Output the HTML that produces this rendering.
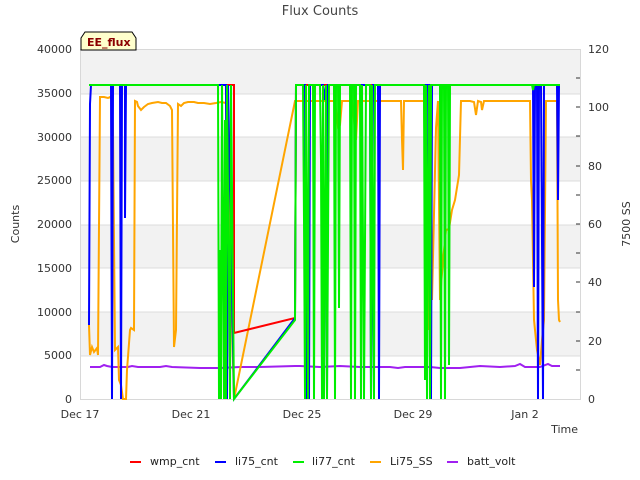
<!DOCTYPE html>
<html><head><meta charset="utf-8"><style>
body{margin:0;background:#fff;}
svg{display:block;font-family:"DejaVu Sans","Liberation Sans",sans-serif;}
</style></head><body>
<svg width="640" height="480" viewBox="0 0 640 480">
<rect width="640" height="480" fill="#fff"/>
<text x="320" y="15" font-size="13" fill="#444" text-anchor="middle">Flux Counts</text>
<!-- bands -->
<rect x="80" y="49" width="500" height="45" fill="#f2f2f2"/>
<rect x="80" y="137" width="500" height="44" fill="#f2f2f2"/>
<rect x="80" y="225" width="500" height="43" fill="#f2f2f2"/>
<rect x="80" y="312" width="500" height="44" fill="#f2f2f2"/>
<g stroke="#dcdcdc" stroke-width="1">
<line x1="80" y1="94" x2="580" y2="94"/><line x1="80" y1="137" x2="580" y2="137"/>
<line x1="80" y1="181" x2="580" y2="181"/><line x1="80" y1="225" x2="580" y2="225"/>
<line x1="80" y1="268" x2="580" y2="268"/><line x1="80" y1="312" x2="580" y2="312"/>
<line x1="80" y1="356" x2="580" y2="356"/>
</g>
<rect x="80.5" y="49.5" width="500" height="350" fill="none" stroke="#d8d8d8"/>
<!-- left labels -->
<g font-size="11" fill="#333" text-anchor="end">
<text x="72" y="53">40000</text><text x="72" y="97">35000</text><text x="72" y="141">30000</text>
<text x="72" y="184">25000</text><text x="72" y="228">20000</text><text x="72" y="272">15000</text>
<text x="72" y="316">10000</text><text x="72" y="359">5000</text><text x="72" y="403">0</text>
</g>
<g font-size="11" fill="#333">
<text x="588" y="53">120</text><text x="588" y="111">100</text><text x="588" y="170">80</text>
<text x="588" y="228">60</text><text x="588" y="286">40</text><text x="588" y="345">20</text><text x="588" y="403">0</text>
</g>
<g stroke="#333" stroke-width="1">
<line x1="576" y1="78" x2="580" y2="78"/><line x1="576" y1="107" x2="580" y2="107"/>
<line x1="576" y1="136" x2="580" y2="136"/><line x1="576" y1="166" x2="580" y2="166"/>
<line x1="576" y1="195" x2="580" y2="195"/><line x1="576" y1="224" x2="580" y2="224"/>
<line x1="576" y1="253" x2="580" y2="253"/><line x1="576" y1="282" x2="580" y2="282"/>
<line x1="576" y1="312" x2="580" y2="312"/><line x1="576" y1="341" x2="580" y2="341"/>
<line x1="576" y1="370" x2="580" y2="370"/>
</g>
<text x="19" y="224" font-size="11" fill="#333" transform="rotate(-90 19 224)" text-anchor="middle">Counts</text>
<text x="630" y="224" font-size="11" fill="#333" transform="rotate(-90 630 224)" text-anchor="middle">7500 SS</text>
<g font-size="11" fill="#333" text-anchor="middle">
<text x="80" y="418">Dec 17</text><text x="191" y="418">Dec 21</text><text x="302" y="418">Dec 25</text>
<text x="413" y="418">Dec 29</text><text x="525" y="418">Jan 2</text>
</g>
<text x="578" y="433" font-size="11" fill="#333" text-anchor="end">Time</text>
<!-- purple -->
<polyline fill="none" stroke="#a020f0" stroke-width="2" points="90,367 100,367 104,365 107,366 112,367 128,367 132,366 138,367 150,367 160,367 166,366 172,367 200,368 220,368 240,367 260,367 295,366 300,366 320,367 340,366 360,367 380,367 390,367 398,368 405,367 412,367 420,367 430,367 440,368 460,368 470,367 480,366 500,367 515,366 520,364 525,367 540,367 548,364 552,366 560,366"/>
<!-- orange -->
<polyline fill="none" stroke="#ffa500" stroke-width="2" points="89,325 90,355 92,347 94,352 97,348 98,355 100,97 104,97 108,98 110,97 112,100 113,130 115,350 118,347 119,380 121,385 123,399 126,399 127,370 130,330 131,328 134,330 135,101 137,102 138,106 141,110 144,107 148,104 152,103 158,102 162,103 166,103 170,106 172,110 174,347 176,330 178,104 181,106 184,103 188,102 194,102 198,103 204,103 210,104 216,103 221,102 226,103 234,399 295,101 300,101 306,101 312,101 320,101 325,101 330,101 335,101 338,127 340,125 342,101 345,101 348,101 352,101 356,140 358,101 362,101 366,101 370,101 380,101 390,101 398,101 401,101 402,140 403,170 404,101 408,101 415,101 420,101 424,101 428,330 430,250 432,300 436,128 438,101 440,300 443,260 446,230 449,229 452,210 455,200 459,175 461,101 464,101 470,101 474,102 476,115 478,101 481,102 482,110 484,101 490,101 500,101 515,101 525,101 530,101 531,180 532,200 534,320 535,330 537,350 539,360 540,365 542,340 544,320 546,101 555,101 557,101 558,300 559,320 560,322"/>
<!-- red -->
<polyline fill="none" stroke="#ff0000" stroke-width="2" points="226,85 234,85 234,333 295,318 296,85 560,85"/>
<!-- blue -->
<polyline fill="none" stroke="#0000ff" stroke-width="2" points="89,325 90,104 91,85 111,85 112,399 113,85 120,85 121,399 122,85 125,85 125,218 126,85 226,85 227,399 228,85 234,399 295,318 296,85 305,85 306,399 307,300 309,399 310,85 323,85 324,100 326,85 327,399 328,85 370,85 371,399 372,260 373,85 378,85 379,399 380,85 425,85 426,250 427,85 430,85 431,399 432,85 533,85 534,287 535,85 537,85 538,399 539,85 541,85 543,399 544,85 557,85 558,200 559,85 560,85"/>
<!-- green -->
<polyline fill="none" stroke="#00ee00" stroke-width="2" points="89,85 218,85 219,399 220,250 221,399 222,85 224,399 225,120 226,399 227,85 230,399 231,85 234,399 295,320 296,85 303,85 304,220 305,399 306,85 308,399 309,85 313,85 314,399 315,85 320,85 321,160 322,399 323,85 324,399 326,85 327,399 329,85 334,85 335,399 336,85 338,85 339,308 340,85 350,85 351,399 352,85 354,85 355,399 356,85 360,85 361,399 362,85 364,399 366,85 370,85 371,399 372,85 374,399 375,85 424,85 425,380 426,85 427,399 428,200 429,85 430,399 431,85 440,85 441,399 442,85 444,85 445,399 446,85 448,85 449,365 450,85 532,85 533,90 534,85 560,85"/>
<!-- label box -->
<path d="M81,50 L81,38 L85,32 L132,32 L136,38 L136,50 Z" fill="#ffffcc" stroke="#000" stroke-width="1"/>
<text x="87" y="46" font-size="11" font-weight="bold" fill="#8b0000">EE_flux</text>
<!-- legend -->
<g stroke-width="2">
<line x1="130" y1="462" x2="141" y2="462" stroke="#ff0000"/>
<line x1="215" y1="462" x2="226" y2="462" stroke="#0000ff"/>
<line x1="293" y1="462" x2="304" y2="462" stroke="#00ee00"/>
<line x1="370" y1="462" x2="381" y2="462" stroke="#ffa500"/>
<line x1="447" y1="462" x2="458" y2="462" stroke="#a020f0"/>
</g>
<g font-size="11" fill="#222">
<text x="150" y="465">wmp_cnt</text><text x="235" y="465">li75_cnt</text>
<text x="312" y="465">li77_cnt</text><text x="390" y="465">Li75_SS</text><text x="467" y="465">batt_volt</text>
</g>
</svg>
</body></html>
